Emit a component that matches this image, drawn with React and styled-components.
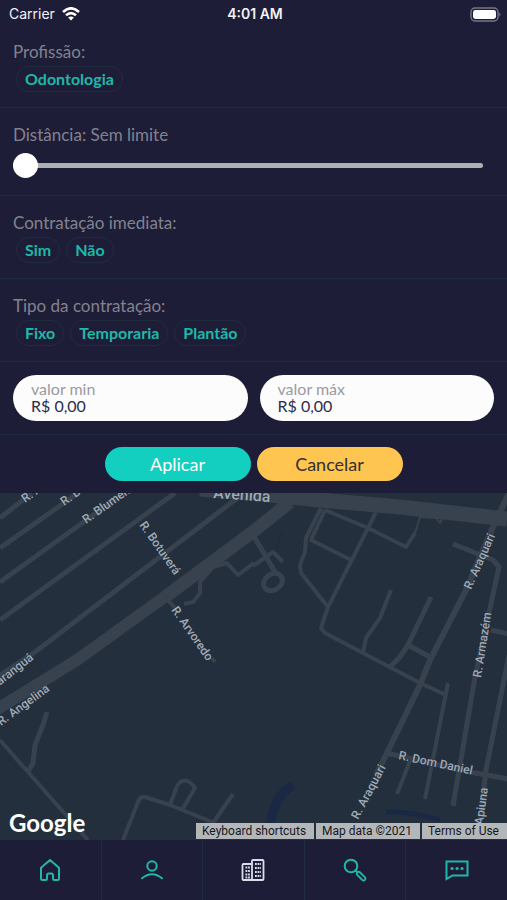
import React, { useState } from 'react';
import styled, { createGlobalStyle } from 'styled-components';

const navy = '#1d1d37';
const teal = '#12cfc0';
const tealDim = '#1fb8a9';
const yellow = '#ffc551';
const line = '#202c3e';
const mapGround = '#232f3d';
const mapRoad = '#38424e';
const mapLabel = '#a0aab5';
const brandFont = "Lato, 'Open Sans', sans-serif";
const systemFont = 'Inter, sans-serif';
const mapFont = 'Roboto, sans-serif';

const GlobalStyle = createGlobalStyle`
  * {
    box-sizing: border-box;
  }

  body {
    margin: 0;
    background: ${navy};
    font-family: ${brandFont};
  }

  button,
  input {
    font-family: inherit;
  }
`;

const Screen = styled.div`
  display: flex;
  flex-direction: column;
  min-height: 100vh;
  background: ${navy};
`;

const StatusBar = styled.header`
  display: grid;
  grid-template-columns: 1fr auto 1fr;
  align-items: center;
  height: 25px;
  padding: 3px 6px 0 9px;
  color: #f2f2f5;
  font-family: ${systemFont};
  font-size: 14px;
  line-height: 20px;
`;

const Carrier = styled.div`
  display: flex;
  align-items: center;
  gap: 7px;
`;

const Clock = styled.div`
  font-weight: 600;
`;

const Battery = styled.div`
  display: flex;
  justify-content: flex-end;
`;

const Section = styled.section`
  padding: 16px 13px 15px;
  border-bottom: 1px solid ${line};
`;

const Title = styled.h2`
  display: block;
  margin: 0;
  color: #82828f;
  font-size: 17px;
  font-weight: 400;
  line-height: 22px;
`;

const Chips = styled.div`
  display: flex;
  flex-wrap: wrap;
  gap: 6px;
  margin: 3px 3px 0;
`;

const Chip = styled.button`
  height: 26px;
  padding: 0 8px;
  border: 1px solid ${line};
  border-radius: 13px;
  background: transparent;
  color: ${tealDim};
  font-size: 16px;
  font-weight: 700;
  line-height: 22px;
  cursor: pointer;
`;

const Range = styled.div`
  display: flex;
  padding: 6px 11px 2px 0;
`;

const Slider = styled.input`
  flex: 1;
  height: 26px;
  margin: 0;
  background: transparent;
  appearance: none;
  cursor: pointer;

  &::-webkit-slider-runnable-track {
    height: 5px;
    border-radius: 3px;
    background: #b1b0b1;
  }

  &::-webkit-slider-thumb {
    width: 25px;
    height: 25px;
    margin-top: -10px;
    border-radius: 50%;
    background: white;
    appearance: none;
  }
`;

const Values = styled.section`
  display: grid;
  grid-template-columns: 1fr 1fr;
  gap: 12px;
  padding: 13px;
  border-bottom: 1px solid ${line};
`;

const Field = styled.label`
  display: flex;
  flex-direction: column;
  height: 46px;
  padding: 5px 18px;
  border-radius: 23px;
  background: #fcfcfd;
  color: #9a9aa2;
  font-size: 16px;
  line-height: 17px;
`;

const FieldInput = styled.input`
  width: 100%;
  height: 17px;
  padding: 0;
  border: 0;
  outline: 0;
  background: transparent;
  color: #2d2b4a;
  font-size: 16px;
  line-height: 17px;
`;

const Actions = styled.div`
  display: flex;
  justify-content: center;
  gap: 6px;
  padding: 12px;
`;

const Action = styled.button`
  width: 146px;
  height: 34px;
  padding: 0;
  border: 0;
  border-radius: 17px;
  background: ${({ $background }) => $background};
  color: ${({ $color }) => $color};
  font-size: 18px;
  line-height: 34px;
  cursor: pointer;
`;

const MapArea = styled.main`
  position: relative;
  flex: 1;
  min-height: 347px;
  overflow: hidden;
  background: ${mapGround};
`;

const MapCanvas = styled.svg`
  position: absolute;
  width: 100%;
  height: 100%;
  font-family: ${mapFont};
`;

const Logo = styled.div`
  position: absolute;
  left: 9px;
  bottom: 2px;
  color: white;
  font-size: 24px;
  font-weight: 700;
  line-height: 30px;
`;

const Credits = styled.div`
  position: absolute;
  right: 0;
  bottom: 1px;
  display: flex;
  gap: 2px;
  color: #16181c;
  font-family: ${mapFont};
  font-size: 12px;
  line-height: 16px;

  & > * {
    height: 16px;
    padding: 0 8px 0 6px;
    border: 0;
    background: #b4b7ba;
    color: inherit;
    font: inherit;
    text-decoration: none;
    white-space: nowrap;
  }
`;

const TabBar = styled.nav`
  display: flex;
  height: 60px;
`;

const Tab = styled.a`
  display: flex;
  flex: 1;
  align-items: center;
  justify-content: center;
  color: ${({ $active }) => ($active ? '#dcdcea' : tealDim)};

  & + & {
    border-left: 1px solid ${line};
  }
`;

const Icon = styled.svg`
  width: 24px;
  height: 24px;
  fill: none;
  stroke: currentColor;
  stroke-width: 2;
  stroke-linecap: round;
  stroke-linejoin: round;
`;

const roads = [
  { d: 'M0 25L32 0', width: 5 },
  { d: 'M0 55L78 0', width: 5 },
  { d: 'M0 89L124 0', width: 5 },
  { d: 'M0 127L175 0', width: 5 },
  { d: 'M-4 185L35 159L244 0', width: 5 },
  { d: 'M-4 217L77 167L170 100', width: 12 },
  { d: 'M165 104L254 38L290 9', width: 13 },
  { d: 'M200 -4L270 2L320 7L400 14L507 26', width: 15 },
  { d: 'M253 42L265 62L275 79', width: 5 },
  { d: 'M253 73L273 59L283 69', width: 4 },
  { d: 'M254 70L238 82L227 70L213 74L200 89L200 100L193 109L184 111', width: 4 },
  { d: 'M165 104L175 115M212 165L215 169', width: 4 },
  { d: 'M321 15L306 45L305 59L300 72L301 80L328 114', width: 4 },
  { d: 'M325 17L311 47L351 67', width: 4 },
  { d: 'M325 17L368 35L406 54L415 40', width: 4 },
  { d: 'M415 40L420 24L436 25L440 30L443 24', width: 2 },
  { d: 'M376 19L368 35L328 114L321 135L325 140L363 160L420 190L446 202', width: 4 },
  { d: 'M391 97L380 125L366 145L363 160', width: 4 },
  { d: 'M431 104L408 152L400 164L389 175M408 152L430 164', width: 5 },
  { d: 'M509 0L493 34L465 99L430 167L420 192L386 262L376 282', width: 6 },
  { d: 'M453 51L493 67L499 74L490 115L475 184L453 313', width: 5 },
  { d: 'M491 137L509 141', width: 5 },
  { d: 'M448 190L425 306', width: 4 },
  { d: 'M509 162L486 277L478 347', width: 5 },
  { d: 'M386 260L475 280L509 286', width: 5 },
  { d: 'M410 268L397 301', width: 4 },
  { d: 'M0 247L28 279L88 347', width: 4 },
  { d: 'M28 279L33 270L35 252L43 232L47 219', width: 5 },
  { d: 'M123 347L138 309Q140 303 145 304L170 312L212 329', width: 4 },
  { d: 'M233 301L213 330L205 342', width: 4 },
  { d: 'M170 312L177 293Q185 281 195 295L182 317', width: 4 },
];

const streets = [
  { name: 'R. Araras', x: 25, y: 10, angle: -35 },
  { name: 'R. Brusque', x: 64, y: 13, angle: -35 },
  { name: 'R. Blumenau', x: 86, y: 31, angle: -35 },
  { name: 'Avenida', x: 213, y: 5, angle: 4, size: 16 },
  { name: 'R. Botuverá', x: 139, y: 32, angle: 55 },
  { name: 'R. Arvoredo', x: 171, y: 117, angle: 55 },
  { name: 'R. Araranguá', x: 34, y: 166, angle: -38, anchor: 'end' },
  { name: 'R. Angelina', x: 1, y: 233, angle: -36 },
  { name: 'R. Araquari', x: 471, y: 97, angle: -66 },
  { name: 'R. Armazém', x: 481, y: 185, angle: -81 },
  { name: 'R. Araquari', x: 358, y: 327, angle: -62 },
  { name: 'R. Dom Daniel', x: 398, y: 266, angle: 12 },
  { name: 'R. Apiuna', x: 488, y: 295, angle: -82, anchor: 'end' },
];

const StreetMap = () => (
  <MapCanvas viewBox="0 0 507 347" preserveAspectRatio="xMidYMid slice">
    <g fill="none" stroke="#1b2843" strokeLinejoin="round">
      <path d="M293 292Q274 303 271 330" strokeWidth="9" />
      <path d="M386 319Q410 318 440 327" strokeWidth="5" />
      <path d="M282 39L276 55" strokeWidth="1" />
    </g>
    <g fill="none" stroke={mapRoad} strokeLinejoin="round">
      {roads.map(({ d, width }) => (
        <path key={d} d={d} strokeWidth={width} />
      ))}
      <ellipse cx="273" cy="89" rx="10" ry="8" strokeWidth="5" transform="rotate(-35 273 89)" />
    </g>
    <g fill={mapLabel} stroke={mapGround} strokeWidth="1" paintOrder="stroke" fontWeight="500">
      {streets.map(({ name, x, y, angle, size = 12, anchor = 'start' }) => (
        <text
          key={`${name}${x}`}
          fontSize={size}
          textAnchor={anchor}
          transform={`translate(${x} ${y}) rotate(${angle})`}
        >
          {name}
        </text>
      ))}
    </g>
  </MapCanvas>
);

const WifiIcon = () => (
  <svg width="18" height="14" viewBox="0 0 18 14" fill="none" stroke="white" strokeWidth="2.6">
    <path d="M1 5Q9 -2.4 17 5" />
    <path d="M4 8.3Q9 4 14 8.3" />
    <path d="M9 13.5L6.1 10.6Q9 8.4 11.9 10.6Z" fill="white" stroke="none" />
  </svg>
);

const BatteryIcon = () => (
  <svg width="31" height="15" viewBox="0 0 31 15">
    <rect x="1" y="1" width="27" height="13" rx="4" fill="none" stroke="#77778a" strokeWidth="1.4" />
    <rect x="3" y="3" width="23" height="9" rx="2.4" fill="white" />
    <path d="M29.4 5.3Q31.6 7.5 29.4 9.7Z" fill="#77778a" />
  </svg>
);

const HomeIcon = () => (
  <Icon viewBox="0 0 24 24">
    <path d="M12 2L3 9.8V20.5Q3 22 4.5 22H7.5Q9 22 9 20.5V17.5Q9 15.5 10.8 15.5H13.2Q15 15.5 15 17.5V20.5Q15 22 16.5 22H19.5Q21 22 21 20.5V9.8Z" />
  </Icon>
);

const PersonIcon = () => (
  <Icon viewBox="0 0 24 24">
    <circle cx="12" cy="8" r="4.7" />
    <path d="M2 20.3Q12 12.3 22 20.3" />
  </Icon>
);

const BuildingsIcon = () => (
  <Icon viewBox="0 0 24 24">
    <path d="M11 22H2.5Q1.5 22 1.5 21V7Q1.5 6 2.5 6H11M12 2H21.5Q22.5 2 22.5 3V21Q22.5 22 21.5 22H12Q11 22 11 21V3Q11 2 12 2Z" strokeWidth="1.8" />
    <path d="M4.5 9.5H9M4.5 13H9M4.5 16.5H9M4.5 19.5H9M14 6H20M14 10H20M14 14H20M14 18H20" strokeWidth="2" strokeDasharray="1.8 .8" strokeLinecap="butt" />
  </Icon>
);

const SearchIcon = () => (
  <Icon viewBox="0 0 24 24">
    <circle cx="8" cy="8" r="6.3" />
    <path d="M12.5 12.5L14.5 14.5M16.6 14L22 19.3Q23 20.7 21.9 21.9Q20.7 23 19.3 22L14 16.6Q13.3 15.5 14.4 14.4Q15.5 13.3 16.6 14Z" strokeWidth="1.8" />
  </Icon>
);

const ChatIcon = () => (
  <Icon viewBox="0 0 24 24">
    <path d="M1.5 3.5H22.5V17.5H7.5L1.5 21Z" strokeLinejoin="miter" />
    <path d="M7 10.5H7.1M12 10.5H12.1M17 10.5H17.1" strokeWidth="3.2" />
  </Icon>
);

const tabs = [
  { id: 'home', label: 'Início', icon: HomeIcon },
  { id: 'profile', label: 'Perfil', icon: PersonIcon },
  { id: 'companies', label: 'Empresas', icon: BuildingsIcon },
  { id: 'search', label: 'Buscar', icon: SearchIcon },
  { id: 'chat', label: 'Mensagens', icon: ChatIcon },
];

const ChipSection = ({ title, options }) => (
  <Section>
    <Title>{title}</Title>
    <Chips>
      {options.map((option) => (
        <Chip key={option} type="button">{option}</Chip>
      ))}
    </Chips>
  </Section>
);

const App = () => {
  const [distance, setDistance] = useState(0);
  const [min, setMin] = useState('R$ 0,00');
  const [max, setMax] = useState('R$ 0,00');

  return (
    <Screen>
      <GlobalStyle />
      <StatusBar>
        <Carrier>
          Carrier
          <WifiIcon />
        </Carrier>
        <Clock>4:01 AM</Clock>
        <Battery>
          <BatteryIcon />
        </Battery>
      </StatusBar>

      <ChipSection title="Profissão:" options={['Odontologia']} />
      <Section>
        <Title as="label" htmlFor="distance">
          Distância: {distance ? `${distance} km` : 'Sem limite'}
        </Title>
        <Range>
          <Slider
            id="distance"
            type="range"
            min="0"
            max="100"
            value={distance}
            onChange={(e) => setDistance(Number(e.target.value))}
          />
        </Range>
      </Section>
      <ChipSection title="Contratação imediata:" options={['Sim', 'Não']} />
      <ChipSection title="Tipo da contratação:" options={['Fixo', 'Temporaria', 'Plantão']} />

      <Values>
        <Field>
          valor min
          <FieldInput value={min} onChange={(e) => setMin(e.target.value)} />
        </Field>
        <Field>
          valor máx
          <FieldInput value={max} onChange={(e) => setMax(e.target.value)} />
        </Field>
      </Values>
      <Actions>
        <Action type="button" $background={teal} $color="white">Aplicar</Action>
        <Action type="button" $background={yellow} $color="#35302f">Cancelar</Action>
      </Actions>

      <MapArea>
        <StreetMap />
        <Logo>Google</Logo>
        <Credits>
          <button type="button">Keyboard shortcuts</button>
          <span>Map data ©2021</span>
          <a href="#terms">Terms of Use</a>
        </Credits>
      </MapArea>

      <TabBar>
        {tabs.map(({ id, label, icon: TabIcon }) => (
          <Tab key={id} href={`#${id}`} aria-label={label} $active={id === 'companies'}>
            <TabIcon />
          </Tab>
        ))}
      </TabBar>
    </Screen>
  );
};

export default App;
